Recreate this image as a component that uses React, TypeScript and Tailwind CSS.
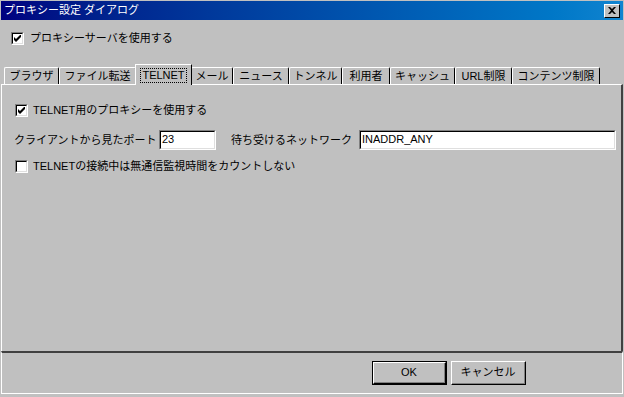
import React from "react";

const font = {
  fontFamily: '"Liberation Sans", "Noto Sans CJK JP", sans-serif',
};

const tabs = [
  { label: "ブラウザ", w: "w-[55px]" },
  { label: "ファイル転送", w: "w-[77px]" },
  { label: "TELNET", w: "w-[57px]", active: true },
  { label: "メール", w: "w-[42px]" },
  { label: "ニュース", w: "w-[56px]" },
  { label: "トンネル", w: "w-[53px]" },
  { label: "利用者", w: "w-[48px]" },
  { label: "キャッシュ", w: "w-[65px]" },
  { label: "URL制限", w: "w-[57px]" },
  { label: "コンテンツ制限", w: "w-[88px]" },
];

const Check = ({ checked }: { checked?: boolean }) => (
  <span className="flex h-[13px] w-[13px] shrink-0 border-t border-l border-t-[#808080] border-l-[#808080] border-r border-b border-r-white border-b-white">
    <span className="flex h-full w-full items-center justify-center border-t border-l border-t-black border-l-black border-r border-b border-r-[#dfdfdf] border-b-[#dfdfdf] bg-white">
      {checked && (
        <svg width="7" height="7" viewBox="0 0 7 7">
          <path d="M0 2v3l2 2l5-5v-3l-5 5z" fill="#000" />
        </svg>
      )}
    </span>
  </span>
);

const Field = ({ value, w }: { value: string; w: string }) => (
  <div className={`${w} h-[20px] shrink-0 border-t border-l border-t-[#808080] border-l-[#808080] border-r border-b border-r-white border-b-white`}>
    <div className="h-full w-full border-t border-l border-t-black border-l-black border-r border-b border-r-[#dfdfdf] border-b-[#dfdfdf] bg-white pl-[1px] text-[11px] leading-[15px] text-black">
      {value}
    </div>
  </div>
);

const Button = ({ label, isDefault }: { label: string; isDefault?: boolean }) => (
  <div className={`h-[24px] w-[75px] ${isDefault ? "border border-black" : ""}`}>
    <div className="h-full w-full border-t border-l border-t-white border-l-white border-r border-b border-r-black border-b-black">
      <div className="flex h-full w-full items-center justify-center border-r border-b border-r-[#808080] border-b-[#808080] text-[11px] text-black">
        {label}
      </div>
    </div>
  </div>
);

export default function App() {
  return (
    <div
      style={font}
      className="flex h-[397px] w-[624px] flex-col overflow-hidden bg-[#c0c0c0] text-[11px] leading-[13px] text-black"
    >
      <div className="mx-[1px] mt-[1px] flex h-[19px] shrink-0 items-center justify-between bg-gradient-to-r from-[#000080] to-[#1084d0] pl-[3px] pr-[3px]">
        <span className="text-[11px] leading-none text-white">プロキシー設定 ダイアログ</span>
        <div className="flex h-[14px] w-[16px] items-center justify-center border-t border-l border-t-white border-l-white border-r border-b border-r-black border-b-black bg-[#c0c0c0]">
          <svg width="8" height="7" viewBox="0 0 8 7">
            <path d="M0 0h2l2 2l2-2h2l-3 3.5l3 3.5h-2l-2-2l-2 2h-2l3-3.5z" fill="#000" />
          </svg>
        </div>
      </div>

      <div className="mt-[12px] flex h-[13px] items-center gap-[6px] pl-[11px]">
        <Check checked />
        <span>プロキシーサーバを使用する</span>
      </div>

      <div className="mt-[18px] flex h-[21px] shrink-0 items-end pl-[4px]">
        {tabs.map((t) =>
          t.active ? (
            <div
              key={t.label}
              className={`${t.w} relative z-10 -mx-[1px] mb-[-1px] flex h-[21px] items-center justify-center border-t border-l border-r border-t-white border-l-white border-r-black bg-[#c0c0c0]`}
            >
              <span className="border border-dotted border-black px-[1px] leading-[13px]">{t.label}</span>
            </div>
          ) : (
            <div
              key={t.label}
              className={`${t.w} flex h-[17px] items-center justify-center rounded-tl-[2px] rounded-tr-[2px] border-t border-l border-r border-t-white border-l-white border-r-black`}
            >
              {t.label}
            </div>
          )
        )}
      </div>

      <div className="mx-[1px] flex h-[267px] shrink-0 flex-col border-t border-l border-r-2 border-t-white border-l-white border-r-[#404040] pl-[12px]">
        <div className="ml-[1px] mt-[19px] flex h-[13px] items-center gap-[5px]">
          <Check checked />
          <span>TELNET用のプロキシーを使用する</span>
        </div>
        <div className="mt-[13px] flex h-[20px] items-center">
          <span className="w-[145px] shrink-0 whitespace-nowrap">クライアントから見たポート</span>
          <Field value="23" w="w-[57px]" />
          <span className="ml-[15px] w-[128px] shrink-0 whitespace-nowrap">待ち受けるネットワーク</span>
          <Field value="INADDR_ANY" w="w-[257px]" />
        </div>
        <div className="ml-[1px] mt-[10px] flex h-[13px] items-center gap-[5px]">
          <Check />
          <span>TELNETの接続中は無通信監視時間をカウントしない</span>
        </div>
      </div>

      <div className="mx-[1px] flex h-[43px] shrink-0 items-center justify-end gap-[4px] border-t-2 border-l border-r border-b border-t-[#404040] border-l-white border-r-white border-b-white pr-[96px]">
        <Button label="OK" isDefault />
        <Button label="キャンセル" />
      </div>
    </div>
  );
}
